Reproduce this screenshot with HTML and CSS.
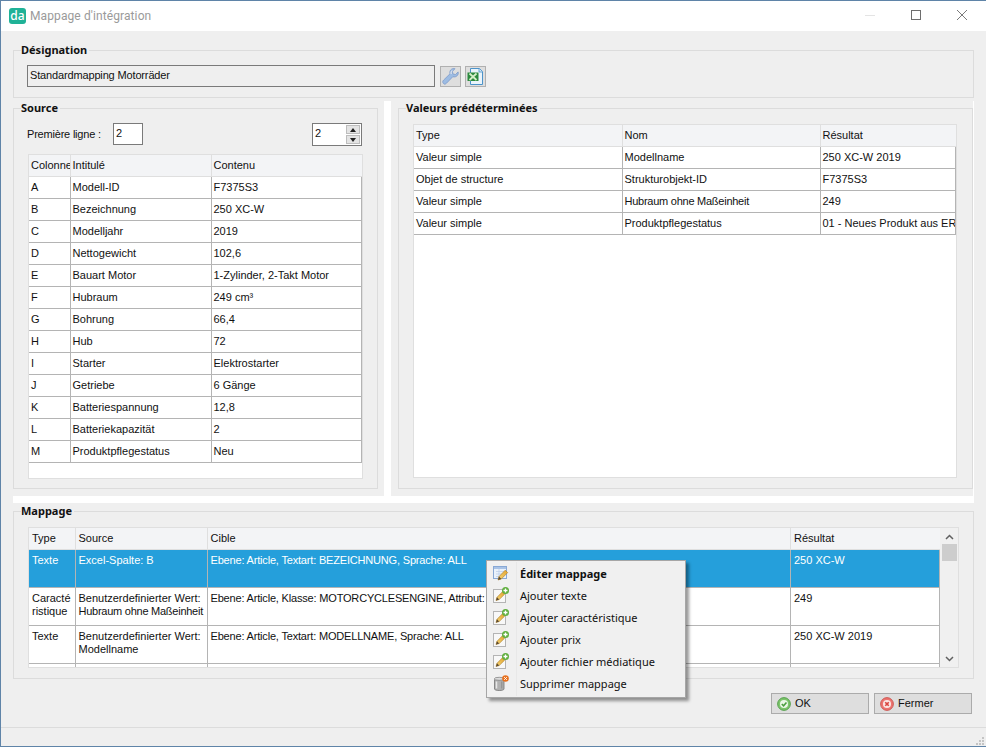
FILE: index.html
```html
<!DOCTYPE html>
<html lang="fr">
<head>
<meta charset="utf-8">
<title>Mappage d'intégration</title>
<link rel="stylesheet" href="styles.css">
</head>
<body>
<svg class="defs" width="0" height="0" aria-hidden="true">
  <defs>
    <linearGradient id="pen" x1="0" y1="1" x2="1" y2="0"><stop offset="0" stop-color="#f6d77a"/><stop offset="1" stop-color="#e2a32c"/></linearGradient>
    <symbol id="add" viewBox="0 0 16 16">
      <rect x="0.5" y="2.5" width="12" height="13" fill="#f8f8f8" stroke="#b4b4b4"/>
      <path d="M3 13.5l1-3.2 5.5-5.6 2.3 2.3-5.6 5.5z" fill="url(#pen)" stroke="#a97a22" stroke-width=".6"/>
      <path d="M3 13.5l1-3.2 2.2 2.2z" fill="#5b4a32"/>
      <circle cx="12.5" cy="3.5" r="3.5" fill="#5fae3d"/>
      <path d="M12.5 1.5v4M10.5 3.5h4" stroke="#fff" stroke-width="1.3"/>
    </symbol>
  </defs>
</svg>
<div class="window">
  <header class="titlebar">
    <span class="logo">da</span>
    <span class="title">Mappage d'intégration</span>
    <span class="controls">
      <svg class="ctl" width="12" height="12" viewBox="0 0 12 12"><path d="M1 6.5h10" stroke="#e4e4e4"/></svg>
      <svg class="ctl" width="12" height="12" viewBox="0 0 12 12"><rect x="1.5" y="1.5" width="9" height="9" fill="none" stroke="#6e6e6e"/></svg>
      <svg class="ctl" width="12" height="12" viewBox="0 0 12 12"><path d="M1 1l10 10M11 1L1 11" stroke="#7a7a7a"/></svg>
    </span>
  </header>

  <main class="content">
    <fieldset class="group designation">
      <legend>Désignation</legend>
      <div class="designation-row">
        <input class="field name-field" type="text" value="Standardmapping Motorräder" readonly>
        <button class="tool" type="button" aria-label="Outil">
          <svg width="19" height="19" viewBox="0 0 19 19"><path d="M2.500 16.500c-1.200-1.200-.9-2.400.2-3.500l6.300-6.200c-.5-2 .1-3.600 1.500-4.600 1-.7 2.300-.9 3.500-.5l-2.600 2.700.5 2.600 2.600.5 2.600-2.600c.4 1.500 0 2.900-1 3.900-1.200 1.100-2.700 1.400-4.300.9l-6.300 6.500c-1.100 1.100-2 1.400-3 .3z" fill="#9dbce3" stroke="#7d9bc9" stroke-width=".8"/><path d="M11 3.500c-.8.800-1.200 2-.8 3.500" fill="none" stroke="#f0f0f0" stroke-width="1"/></svg>
        </button>
        <button class="tool" type="button" aria-label="Excel">
          <svg width="19" height="19" viewBox="0 0 19 19"><path d="M4.500 1.500h9l3 3v13h-12z" fill="#eaf4fb" stroke="#4c93c9"/><path d="M13 1.500v3.500h3.500" fill="#cfe5f5" stroke="#4c93c9" stroke-width=".8"/><rect x="1.500" y="5.500" width="11" height="8.500" fill="#2c8a3e"/><path d="M3.500 6.500l7 6.500M10.500 6.500l-7 6.500" stroke="#d4efc8" stroke-width="1.800"/></svg>
        </button>
      </div>
    </fieldset>

    <div class="split">
      <div class="panes">
        <div class="pane pane-source">
          <fieldset class="group source">
            <legend>Source</legend>
            <div class="line-row">
              <label class="line-label" for="first-line">Première ligne :</label>
              <input class="field line-field" id="first-line" type="text" value="2" readonly>
              <span class="spin">
                <span class="spin-value">2</span>
                <span class="spin-arrows">
                  <span class="arrow"><i class="tri tri-up"></i></span>
                  <span class="arrow"><i class="tri tri-down"></i></span>
                </span>
              </span>
            </div>
            <div class="grid-box source-box">
              <table class="grid">
                <colgroup><col class="c-src1"><col class="c-src2"><col></colgroup>
                <thead><tr><th>Colonne</th><th>Intitulé</th><th>Contenu</th></tr></thead>
                <tbody>
                  <tr><td>A</td><td>Modell-ID</td><td>F7375S3</td></tr>
                  <tr><td>B</td><td>Bezeichnung</td><td>250 XC-W</td></tr>
                  <tr><td>C</td><td>Modelljahr</td><td>2019</td></tr>
                  <tr><td>D</td><td>Nettogewicht</td><td>102,6</td></tr>
                  <tr><td>E</td><td>Bauart Motor</td><td>1-Zylinder, 2-Takt Motor</td></tr>
                  <tr><td>F</td><td>Hubraum</td><td>249 cm³</td></tr>
                  <tr><td>G</td><td>Bohrung</td><td>66,4</td></tr>
                  <tr><td>H</td><td>Hub</td><td>72</td></tr>
                  <tr><td>I</td><td>Starter</td><td>Elektrostarter</td></tr>
                  <tr><td>J</td><td>Getriebe</td><td>6 Gänge</td></tr>
                  <tr><td>K</td><td>Batteriespannung</td><td>12,8</td></tr>
                  <tr><td>L</td><td>Batteriekapazität</td><td>2</td></tr>
                  <tr><td>M</td><td>Produktpflegestatus</td><td>Neu</td></tr>
                </tbody>
              </table>
            </div>
          </fieldset>
        </div>
        <div class="pane pane-values">
          <fieldset class="group values">
            <legend>Valeurs prédéterminées</legend>
            <div class="grid-box values-box">
              <table class="grid">
                <colgroup><col class="c-val1"><col class="c-val2"><col></colgroup>
                <thead><tr><th>Type</th><th>Nom</th><th>Résultat</th></tr></thead>
                <tbody>
                  <tr><td>Valeur simple</td><td>Modellname</td><td>250 XC-W 2019</td></tr>
                  <tr><td>Objet de structure</td><td>Strukturobjekt-ID</td><td>F7375S3</td></tr>
                  <tr><td>Valeur simple</td><td><span class="tight">Hubraum ohne Maßeinheit</span></td><td>249</td></tr>
                  <tr><td>Valeur simple</td><td>Produktpflegestatus</td><td>01 - Neues Produkt aus ERP</td></tr>
                </tbody>
              </table>
            </div>
          </fieldset>
        </div>
      </div>

      <div class="pane pane-mapping">
        <fieldset class="group mapping">
          <legend>Mappage</legend>
          <div class="grid-box mapping-box">
            <table class="grid map-grid">
              <colgroup><col class="c-map1"><col class="c-map2"><col><col class="c-map4"></colgroup>
              <thead><tr><th>Type</th><th>Source</th><th>Cible</th><th>Résultat</th></tr></thead>
              <tbody>
                <tr class="selected"><td>Texte</td><td>Excel-Spalte: B</td><td>Ebene: Article, Textart: BEZEICHNUNG, Sprache: ALL</td><td>250 XC-W</td></tr>
                <tr><td>Caracté<br>ristique</td><td>Benutzerdefinierter Wert:<br><span class="tight">Hubraum ohne Maßeinheit</span></td><td>Ebene: Article, Klasse: MOTORCYCLESENGINE, Attribut: Hubraum</td><td>249</td></tr>
                <tr><td>Texte</td><td>Benutzerdefinierter Wert:<br>Modellname</td><td>Ebene: Article, Textart: MODELLNAME, Sprache: ALL</td><td>250 XC-W 2019</td></tr>
                <tr><td></td><td></td><td></td><td></td></tr>
              </tbody>
            </table>
            <div class="scrollbar">
              <svg class="sb-arrow" width="9" height="6" viewBox="0 0 9 6"><path d="M1 5l3.500-3.500L8 5" fill="none" stroke="#606060" stroke-width="1.500"/></svg>
              <span class="sb-thumb"></span>
              <svg class="sb-arrow sb-down" width="9" height="6" viewBox="0 0 9 6"><path d="M1 1l3.500 3.500L8 1" fill="none" stroke="#606060" stroke-width="1.500"/></svg>
            </div>
          </div>
        </fieldset>
      </div>
    </div>

    <div class="actions">
      <button class="btn" type="button">
        <svg width="14" height="14" viewBox="0 0 16 16"><circle cx="8" cy="8" r="7.300" fill="#7cc46b" stroke="#4d9a45"/><circle cx="8" cy="8" r="4.600" fill="#eaf7e6"/><path d="M5.500 8l2 2 3.300-3.800" fill="none" stroke="#4a9e3e" stroke-width="1.800"/></svg>
        <span>OK</span>
      </button>
      <button class="btn" type="button">
        <svg width="14" height="14" viewBox="0 0 16 16"><circle cx="8" cy="8" r="7.300" fill="#ec7470" stroke="#c9504c"/><circle cx="8" cy="8" r="4.600" fill="#fae6e4"/><path d="M6 6l4 4M10 6l-4 4" stroke="#d9443f" stroke-width="1.900"/></svg>
        <span>Fermer</span>
      </button>
    </div>
  </main>

  <footer class="statusbar">
    <svg class="grip" width="10" height="10" viewBox="0 0 10 10"><path d="M7 1h2v2H7zM4 4h2v2H4zM7 4h2v2H7zM1 7h2v2H1zM4 7h2v2H4zM7 7h2v2H7z" fill="#c4c4c4"/></svg>
  </footer>

  <nav class="menu">
    <div class="menu-item strong">
      <svg class="menu-icon" width="16" height="16" viewBox="0 0 16 16"><rect x="0.500" y="1.500" width="13" height="12" fill="#eaf2fb" stroke="#88a8d4"/><rect x="1" y="2" width="12" height="2" fill="#a9c3e6"/><path d="M3 6.500h8M3 9h8M3 11.500h8M6 4v9" stroke="#b9cde8" stroke-width=".7"/><path d="M5 15l1-3.400 6.200-6.400 2.500 2.400-6.300 6.300z" fill="url(#pen)" stroke="#a97a22" stroke-width=".6"/><path d="M5 15l1-3.400 2.400 2.300z" fill="#5b4a32"/></svg>
      <span>Éditer mappage</span>
    </div>
    <div class="menu-item"><svg class="menu-icon" width="16" height="16"><use href="#add"/></svg><span>Ajouter texte</span></div>
    <div class="menu-item"><svg class="menu-icon" width="16" height="16"><use href="#add"/></svg><span>Ajouter caractéristique</span></div>
    <div class="menu-item"><svg class="menu-icon" width="16" height="16"><use href="#add"/></svg><span>Ajouter prix</span></div>
    <div class="menu-item"><svg class="menu-icon" width="16" height="16"><use href="#add"/></svg><span>Ajouter fichier médiatique</span></div>
    <div class="menu-item">
      <svg class="menu-icon" width="16" height="16" viewBox="0 0 16 16"><path d="M1.500 4.500h9.500v9.500c0 .9-2 1.500-4.750 1.500S1.500 14.900 1.500 14z" fill="#b0b0b0" stroke="#737373" stroke-width=".8"/><path d="M3.500 6.500v7" stroke="#e6e6e6" stroke-width="1.500"/><path d="M8.800 6.500v7" stroke="#8c8c8c"/><ellipse cx="6.250" cy="3.800" rx="4.900" ry="1.500" fill="#dcdcdc" stroke="#777" stroke-width=".7"/><circle cx="12.500" cy="3.500" r="3.300" fill="#e8711f"/><path d="M11.200 2.200l2.600 2.600M13.800 2.200l-2.600 2.600" stroke="#fff" stroke-width="1"/></svg>
      <span>Supprimer mappage</span>
    </div>
  </nav>
</div>
</body>
</html>
```

FILE: styles.css
```css
* { box-sizing: border-box; }

html, body {
  margin: 0;
  padding: 0;
}

body {
  font-family: "Liberation Sans", "Noto Sans", sans-serif;
  font-size: 11px;
  color: #111;
  background: #efefef;
}

.defs { position: absolute; }

.window {
  position: relative;
  width: 986px;
  height: 747px;
  border: 1px solid #5f84a8;
  border-right-width: 0;
  background: #efefef;
  display: flex;
  flex-direction: column;
  overflow: hidden;
}

/* title bar */
.titlebar {
  flex: none;
  height: 30px;
  background: #fff;
  display: flex;
  align-items: center;
  padding-left: 8px;
}

.logo {
  width: 17px;
  height: 16px;
  border-radius: 3px;
  background: #1fb297;
  color: #fff;
  font-family: "Noto Sans", sans-serif;
  font-size: 12px;
  line-height: 15px;
  text-align: center;
  font-weight: 500;
}

.title {
  margin: 0 0 0 4px;
  font-family: Roboto, sans-serif;
  font-size: 12px;
  letter-spacing: .1px;
  color: #9a9a9a;
}

.controls {
  margin: -2px 0 0 auto;
  display: flex;
  gap: 34px;
  padding-right: 18px;
}

/* content */
.content {
  flex: 1;
  display: flex;
  flex-direction: column;
  padding: 12px 12px 0;
}

.group {
  margin: 0;
  min-width: 0;
  border: 1px solid #dcdcdc;
  background: transparent;
}

.group legend {
  padding: 0 2px 0 0;
  margin-left: -7px;
  font-family: "Noto Sans", sans-serif;
  font-size: 11px;
  font-weight: 700;
  line-height: 14px;
  height: 14px;
}

.designation {
  height: 55px;
  padding: 8px 0 0 13px;
  margin-bottom: 3px;
}

.designation legend { margin-left: -6px; }

.designation-row {
  display: flex;
  align-items: flex-start;
}

.field {
  font: inherit;
  color: #111;
  border: 1px solid #7a7a7a;
  border-radius: 0;
  outline: none;
  height: 22px;
  padding: 0 2px 3px;
}

.name-field {
  width: 408px;
  background: #efefef;
  margin-right: 5px;
  letter-spacing: -.15px;
}

.tool {
  width: 21px;
  height: 21px;
  margin: 1px 4px 0 0;
  padding: 0;
  background: #dedede;
  border: 1px solid #b0b0b0;
  display: flex;
  align-items: center;
  justify-content: center;
}

.split {
  background: #fff;
}

.panes {
  display: grid;
  grid-template-columns: 371px 582px;
  column-gap: 7px;
  background: #fff;
}

.pane {
  background: #efefef;
}

.pane-source { padding: 0 6px 7px 0; }
.pane-values { padding: 0 0 7px 7px; }

.source,
.values { height: 388px; }

.source { padding: 8px 15px 0 14px; }
.values { padding: 9px 15px 0 14px; }

.line-row {
  display: flex;
  align-items: flex-start;
  height: 23px;
  margin-bottom: 8px;
}

.line-label {
  width: 86px;
  margin-left: -1px;
  line-height: 22px;
  letter-spacing: -.2px;
}

.line-field {
  width: 30px;
  background: #fff;
}

.spin {
  margin-left: auto;
  width: 50px;
  height: 23px;
  border: 1px solid #7a7a7a;
  background: #fff;
  display: flex;
  justify-content: space-between;
  padding: 1px;
}

.spin-value { padding-left: 1px; line-height: 17px; }

.spin-arrows {
  width: 14px;
  display: flex;
  flex-direction: column;
  gap: 1px;
}

.arrow {
  flex: 1;
  background: #e4e4e4;
  border: 1px solid #bdbdbd;
  display: flex;
  align-items: center;
  justify-content: center;
}

.tri {
  width: 0;
  height: 0;
  border-left: 3px solid transparent;
  border-right: 3px solid transparent;
}

.tri-up { border-bottom: 4px solid #222; }
.tri-down { border-top: 4px solid #222; }

/* tables */
.grid-box {
  background: #fff;
  border: 1px solid #dfdfdf;
  overflow: hidden;
}

.source-box { height: 325px; width: 335px; margin-left: 0; }
.values-box { height: 354px; }
.mapping-box {
  height: 141px;
  display: flex;
}

.grid {
  width: 100%;
  border-collapse: collapse;
  table-layout: fixed;
}

.grid th,
.grid td {
  padding: 0 0 0 2px;
  font-weight: 400;
  text-align: left;
  overflow: hidden;
  white-space: nowrap;
  height: 22px;
  vertical-align: middle;
  border-right: 1px solid #b4b4b4;
  border-bottom: 1px solid #b4b4b4;
}

.grid th {
  height: 21px;
  background: #f3f4f6;
  border-right-color: #dfdfdf;
  border-bottom-color: #dfdfdf;
}

.grid th:last-child { border-right: 0; }

.tight { letter-spacing: -.25px; }

.c-src1 { width: 41px; }
.c-src2 { width: 141px; }
.c-val1 { width: 208px; }
.c-val2 { width: 198px; }
.c-map1 { width: 46px; }
.c-map2 { width: 132px; }
.c-map4 { width: 149px; }

.map-grid { flex: 1; min-width: 0; align-self: flex-start; }

.map-grid th { padding-left: 3px; }

.map-grid td {
  height: 38px;
  padding: 4px 0 0 3px;
  vertical-align: top;
  line-height: 13px;
}

.map-grid td:nth-child(3) { letter-spacing: -.18px; }

.selected td {
  background: #259fdb;
  color: #fff;
}

.scrollbar {
  flex: none;
  width: 18px;
  background: #f0f0f0;
  display: flex;
  flex-direction: column;
  align-items: center;
  padding-top: 6px;
}

.sb-thumb {
  width: 15px;
  height: 17px;
  margin-top: 4px;
  background: #cdcdcd;
}

.sb-down { margin-top: auto; margin-bottom: 5px; }

.pane-mapping {
  margin-top: 7px;
  padding-top: 1px;
}

.mapping {
  height: 175px;
  padding: 9px 14px 0 14px;
}

/* actions */
.actions {
  display: flex;
  justify-content: flex-end;
  gap: 5px;
  margin: 14px 2px 0 0;
}

.btn {
  width: 98px;
  height: 21px;
  padding: 0 0 0 5px;
  font: inherit;
  font-size: 11px;
  color: #111;
  background: #dedede;
  border: 1px solid #ababab;
  display: flex;
  align-items: center;
  gap: 4px;
}

.btn span { margin-top: -1px; }

.statusbar {
  position: relative;
  flex: none;
  height: 19px;
  border-top: 1px solid #dcdcdc;
  background: #efefef;
  display: flex;
  justify-content: flex-end;
  align-items: flex-end;
}

.grip { margin: 0 1px 0 0; }

/* context menu */
.menu {
  position: absolute;
  left: 485px;
  top: 559px;
  width: 200px;
  height: 138px;
  padding: 2px 0;
  background: #f0f0f0;
  border: 1px solid #a6a6a6;
  box-shadow: 3px 3px 3px rgba(0, 0, 0, .4);
  font-family: "Noto Sans", sans-serif;
}

.menu::before {
  content: "";
  position: absolute;
  left: 29px;
  top: 1px;
  bottom: 1px;
  width: 1px;
  background: #e8e8e8;
}

.menu-item {
  height: 22px;
  display: flex;
  align-items: center;
  padding-left: 6px;
  margin-top: -1px;
  margin-bottom: 1px;
}

.menu-icon { flex: none; margin-right: 11px; }

.menu-item.strong { font-weight: 700; }
```
